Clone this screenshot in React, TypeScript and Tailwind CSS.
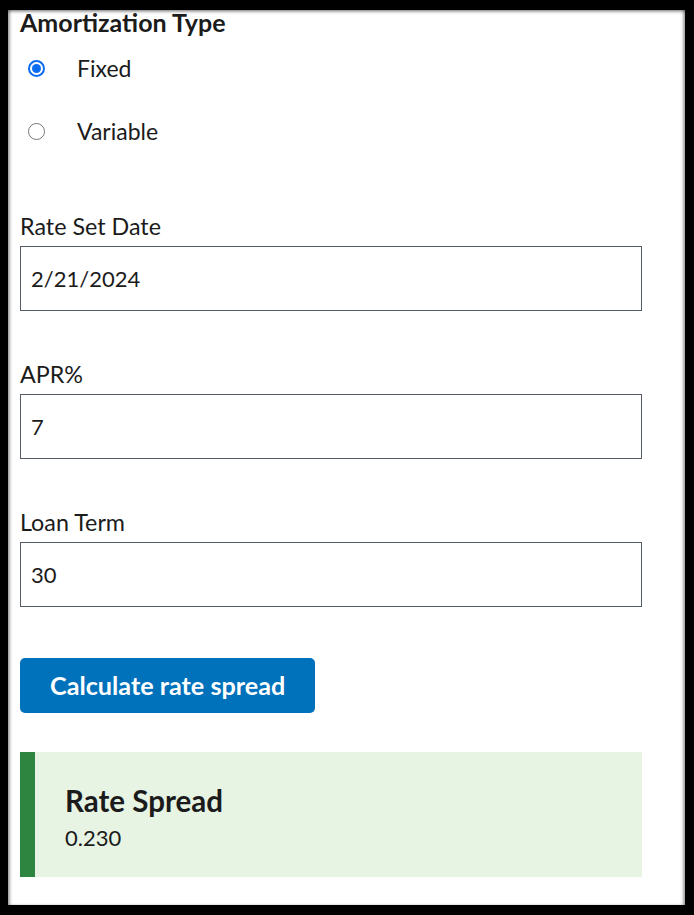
import { useState } from 'react'

const font = { fontFamily: 'Lato, "Noto Sans", sans-serif' }

function Radio({ label, checked, onSelect }: { label: string; checked: boolean; onSelect: () => void }) {
  return (
    <button onClick={onSelect} className="flex items-center h-[32px] text-left">
      <span className="w-[57px] pl-[8px] flex items-center">
        {checked ? (
          <span className="w-[17px] h-[17px] rounded-full border-[2px] border-[#0b6cf0] flex items-center justify-center">
            <span className="w-[9px] h-[9px] rounded-full bg-[#0b6cf0]" />
          </span>
        ) : (
          <span className="w-[17px] h-[17px] rounded-full border-[1.5px] border-[#767676] bg-white" />
        )}
      </span>
      <span className="text-[23px] text-[#1b1b1b]">{label}</span>
    </button>
  )
}

function Field({ label, value }: { label: string; value: string }) {
  return (
    <div className="flex flex-col">
      <label className="text-[23.3px] leading-[28px] text-[#1b1b1b]">{label}</label>
      <div className="mt-[6px] h-[65px] w-[622px] border border-[#565c65] flex items-center pl-[10px] text-[22px] text-[#1b1b1b]">
        {value}
      </div>
    </div>
  )
}

export default function App() {
  const [type, setType] = useState('fixed')

  return (
    <div className="w-[694px] h-[915px] bg-black pt-[10px] pl-[8px] pr-[9px] pb-[10px]" style={font}>
      <div className="h-full bg-white pl-[12px] shadow-[inset_0_3px_3px_-1px_rgba(0,0,0,0.35),inset_3px_0_3px_-1px_rgba(0,0,0,0.35),inset_-3px_0_3px_-1px_rgba(0,0,0,0.35)]">
        <h2 className="text-[25px] leading-[24px] font-bold text-[#1b1b1b]">Amortization Type</h2>

        <div className="mt-[18px] flex flex-col gap-[31px]">
          <Radio label="Fixed" checked={type === 'fixed'} onSelect={() => setType('fixed')} />
          <Radio label="Variable" checked={type === 'variable'} onSelect={() => setType('variable')} />
        </div>

        <div className="mt-[65px] flex flex-col gap-[49px]">
          <Field label="Rate Set Date" value="2/21/2024" />
          <Field label="APR%" value="7" />
          <Field label="Loan Term" value="30" />
        </div>

        <button className="mt-[51px] h-[55px] px-[30px] rounded-[5px] bg-[#0071bb] text-white text-[25.2px] font-bold">
          Calculate rate spread
        </button>

        <div className="mt-[39px] w-[622px] h-[125px] bg-[#e7f4e4] border-l-[15px] border-[#2e8540] pl-[30px] pt-[33px]">
          <div className="text-[29.5px] leading-[32px] font-bold text-[#1b1b1b]">Rate Spread</div>
          <div className="mt-[7px] text-[22px] leading-[28px] text-[#1b1b1b]">0.230</div>
        </div>
      </div>
    </div>
  )
}
